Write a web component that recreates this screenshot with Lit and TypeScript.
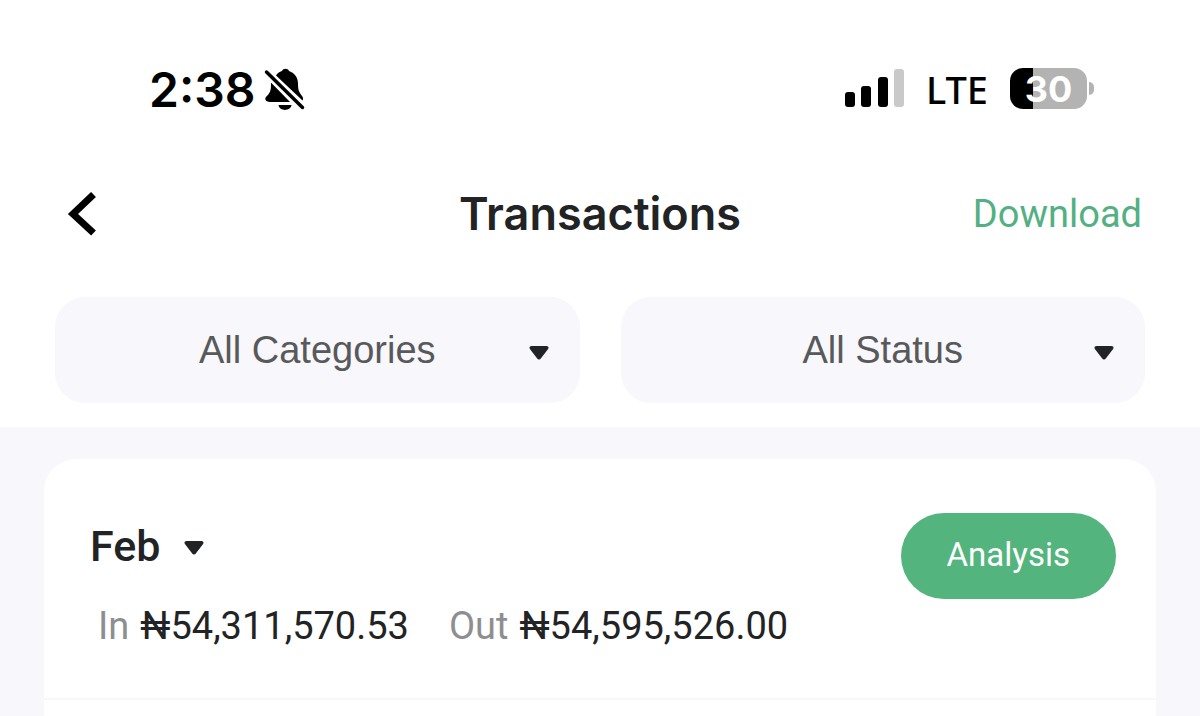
import { LitElement, html, css, svg } from "lit";
import { customElement, property, state } from "lit/decorators.js";

const caret = html`<svg class="caret" viewBox="0 0 20 16" aria-hidden="true">
  <path d="M2.500 1h15c1.700 0 2.600 1.600 1.600 2.900l-7.100 9.400c-1 1.600-3 1.600-4 0L.9 3.900C-.1 2.600 .8 1 2.500 1z" fill="#222325" />
</svg>`;

const caretStyles = css`
  .caret {
    width: 20px;
    height: 16px;
    flex: none;
    pointer-events: none;
  }
  select {
    appearance: none;
    border: 0;
    margin: 0;
    padding: 0;
    background: transparent;
    cursor: pointer;
  }
`;

@customElement("status-bar")
class StatusBar extends LitElement {
  static styles = css`
    :host {
      display: flex;
      align-items: flex-start;
      justify-content: space-between;
      padding: 61px 106px 0 149px;
      height: 57px;
      color: #000;
      font-family: Inter, sans-serif;
    }
    .group {
      display: flex;
      align-items: center;
    }
    .time {
      font-size: 48px;
      line-height: 58px;
      font-weight: 600;
    }
    .bell {
      width: 42px;
      height: 44px;
      margin-left: 9px;
    }
    .signal {
      width: 60px;
      height: 40px;
    }
    .network {
      margin: 2px 22px 0 21px;
      font: 500 38px/52px "Noto Sans", sans-serif;
    }
    .battery {
      display: flex;
      align-items: center;
    }
    .cell {
      box-sizing: border-box;
      width: 77px;
      height: 41px;
      border-radius: 13px;
      text-align: center;
      font-size: 36px;
      line-height: 42px;
      font-weight: 700;
      color: #fff;
    }
    .tip {
      width: 5px;
      height: 13px;
      margin-left: 2px;
      border-radius: 0 6px 6px 0;
      background: #b3b3b3;
    }
  `;

  @property({ type: Number }) charge = 30;

  render() {
    const bars = [
      { x: 0, h: 15, fill: "#000" },
      { x: 16, h: 21, fill: "#000" },
      { x: 33, h: 30, fill: "#000" },
      { x: 49, h: 38, fill: "#c9c9c9" },
    ];
    return html`
      <div class="group">
        <span class="time">2:38</span>
        <svg class="bell" viewBox="0 0 42 44" role="img" aria-label="Silent mode">
          <path d="M12 7.500C14 4.500 16.500 3.500 18 3c1-3 6-3 7 0 6 2 9 7 9 13 0 6 1 8 4 12 1 1 1.500 3 .5 4.500zM7 14.500L26 34H6C1 34 0 30 3 28c4-4 4-7 4-13.500zM14.500 37h13c-1 6.500-12 6.500-13 0z" fill="#000" />
          <path d="M2.500 4L38.500 39.500" stroke="#fff" stroke-width="8" />
          <path d="M2.500 4L38.500 39.500" stroke="#000" stroke-width="3.500" stroke-linecap="round" />
        </svg>
      </div>
      <div class="group">
        <svg class="signal" viewBox="0 0 60 40" role="img" aria-label="Signal strength">
          ${bars.map(
            (b) => svg`<rect x=${b.x} y=${39 - b.h} width="10" height=${b.h} rx="3" fill=${b.fill} />`
          )}
        </svg>
        <span class="network">LTE</span>
        <div class="battery">
          <div
            class="cell"
            style="background: linear-gradient(to right, #000 ${this.charge}%, #b3b3b3 ${this.charge}%)"
          >${this.charge}</div>
          <div class="tip"></div>
        </div>
      </div>
    `;
  }
}

@customElement("filter-select")
class FilterSelect extends LitElement {
  static styles = [
    caretStyles,
    css`
      :host {
        display: block;
      }
      .box {
        display: grid;
        align-items: center;
        border-radius: 30px;
        background: #f7f7fc;
      }
      select {
        grid-area: 1 / 1;
        width: 100%;
        height: 106px;
        border-radius: 30px;
        color: #58595b;
        font: 38px/44px "Liberation Sans", Arial, sans-serif;
        text-align: center;
        text-align-last: center;
      }
      .caret {
        grid-area: 1 / 1;
        justify-self: end;
        margin: 6px 31px 0 0;
      }
    `,
  ];

  @property() label = "";
  @property({ attribute: false }) options: string[] = [];

  render() {
    return html`<div class="box">
      <select aria-label=${this.label}>
        ${this.options.map((o) => html`<option>${o}</option>`)}
      </select>
      ${caret}
    </div>`;
  }
}

@customElement("month-card")
class MonthCard extends LitElement {
  static styles = [
    caretStyles,
    css`
      :host {
        display: block;
        border-radius: 32px 32px 0 0;
        background: #fff;
        font-family: Roboto, sans-serif;
        color: #222325;
      }
      .summary {
        display: flex;
        align-items: flex-start;
        justify-content: space-between;
        padding: 54px 40px 48px 46px;
        border-bottom: 2px solid #f8f8fa;
      }
      .month {
        display: flex;
        align-items: center;
        gap: 23px;
        padding-top: 7px;
      }
      .month select {
        color: inherit;
        font: 500 43px/52px Roboto, sans-serif;
      }
      .month .caret {
        margin-top: 4px;
      }
      .totals {
        display: flex;
        gap: 40px;
        margin: 30px 0 0;
        padding-left: 8px;
        font-size: 38px;
        line-height: 48px;
      }
      .total {
        display: flex;
        gap: 11px;
      }
      dt {
        color: #8e8e90;
      }
      dd {
        margin: 0;
      }
      .analysis {
        padding: 0 46px 2px;
        height: 86px;
        border: 0;
        border-radius: 43px;
        background: #53b57d;
        color: #fff;
        font: 33px/40px Roboto, sans-serif;
        cursor: pointer;
      }
      .list {
        min-height: 80px;
      }
    `,
  ];

  @state() totals = [
    { name: "In", amount: "₦54,311,570.53" },
    { name: "Out", amount: "₦54,595,526.00" },
  ];

  render() {
    return html`
      <div class="summary">
        <div>
          <div class="month">
            <select aria-label="Month"><option>Feb</option></select>
            ${caret}
          </div>
          <dl class="totals">
            ${this.totals.map(
              (t) => html`<div class="total"><dt>${t.name}</dt><dd>${t.amount}</dd></div>`
            )}
          </dl>
        </div>
        <button class="analysis" type="button">Analysis</button>
      </div>
      <div class="list"></div>
    `;
  }
}

@customElement("app-root")
class AppRoot extends LitElement {
  static styles = css`
    :host {
      display: flex;
      flex-direction: column;
      height: 100vh;
      overflow: hidden;
      background: #fff;
    }
    .nav {
      display: grid;
      grid-template-columns: 1fr auto 1fr;
      align-items: center;
      padding: 66px 58px 0;
      height: 60px;
    }
    .back {
      justify-self: start;
      display: flex;
      padding: 0 8px;
      border: 0;
      background: none;
      cursor: pointer;
    }
    .back svg {
      width: 32px;
      height: 44px;
    }
    h1 {
      margin: 0;
      color: #222325;
      font: 600 45px/60px Inter, sans-serif;
    }
    .download {
      justify-self: end;
      color: #53b082;
      font: 38px/48px Roboto, sans-serif;
      text-decoration: none;
    }
    .filters {
      display: grid;
      grid-template-columns: 1fr 1fr;
      gap: 41px;
      padding: 53px 55px 24px;
    }
    .content {
      flex: 1;
      padding: 32px 44px 0;
      background: #f7f7fc;
    }
    month-card {
      min-height: 100%;
    }
  `;

  render() {
    return html`
      <status-bar></status-bar>
      <header class="nav">
        <button class="back" type="button" aria-label="Back">
          <svg viewBox="0 0 32 44" aria-hidden="true">
            <path d="M27.500 2.500L7 22L27.500 41" fill="none" stroke="#000" stroke-width="7" />
          </svg>
        </button>
        <h1>Transactions</h1>
        <a class="download" href="#download">Download</a>
      </header>
      <div class="filters">
        <filter-select label="Category" .options=${["All Categories"]}></filter-select>
        <filter-select label="Status" .options=${["All Status"]}></filter-select>
      </div>
      <main class="content"><month-card></month-card></main>
    `;
  }
}
